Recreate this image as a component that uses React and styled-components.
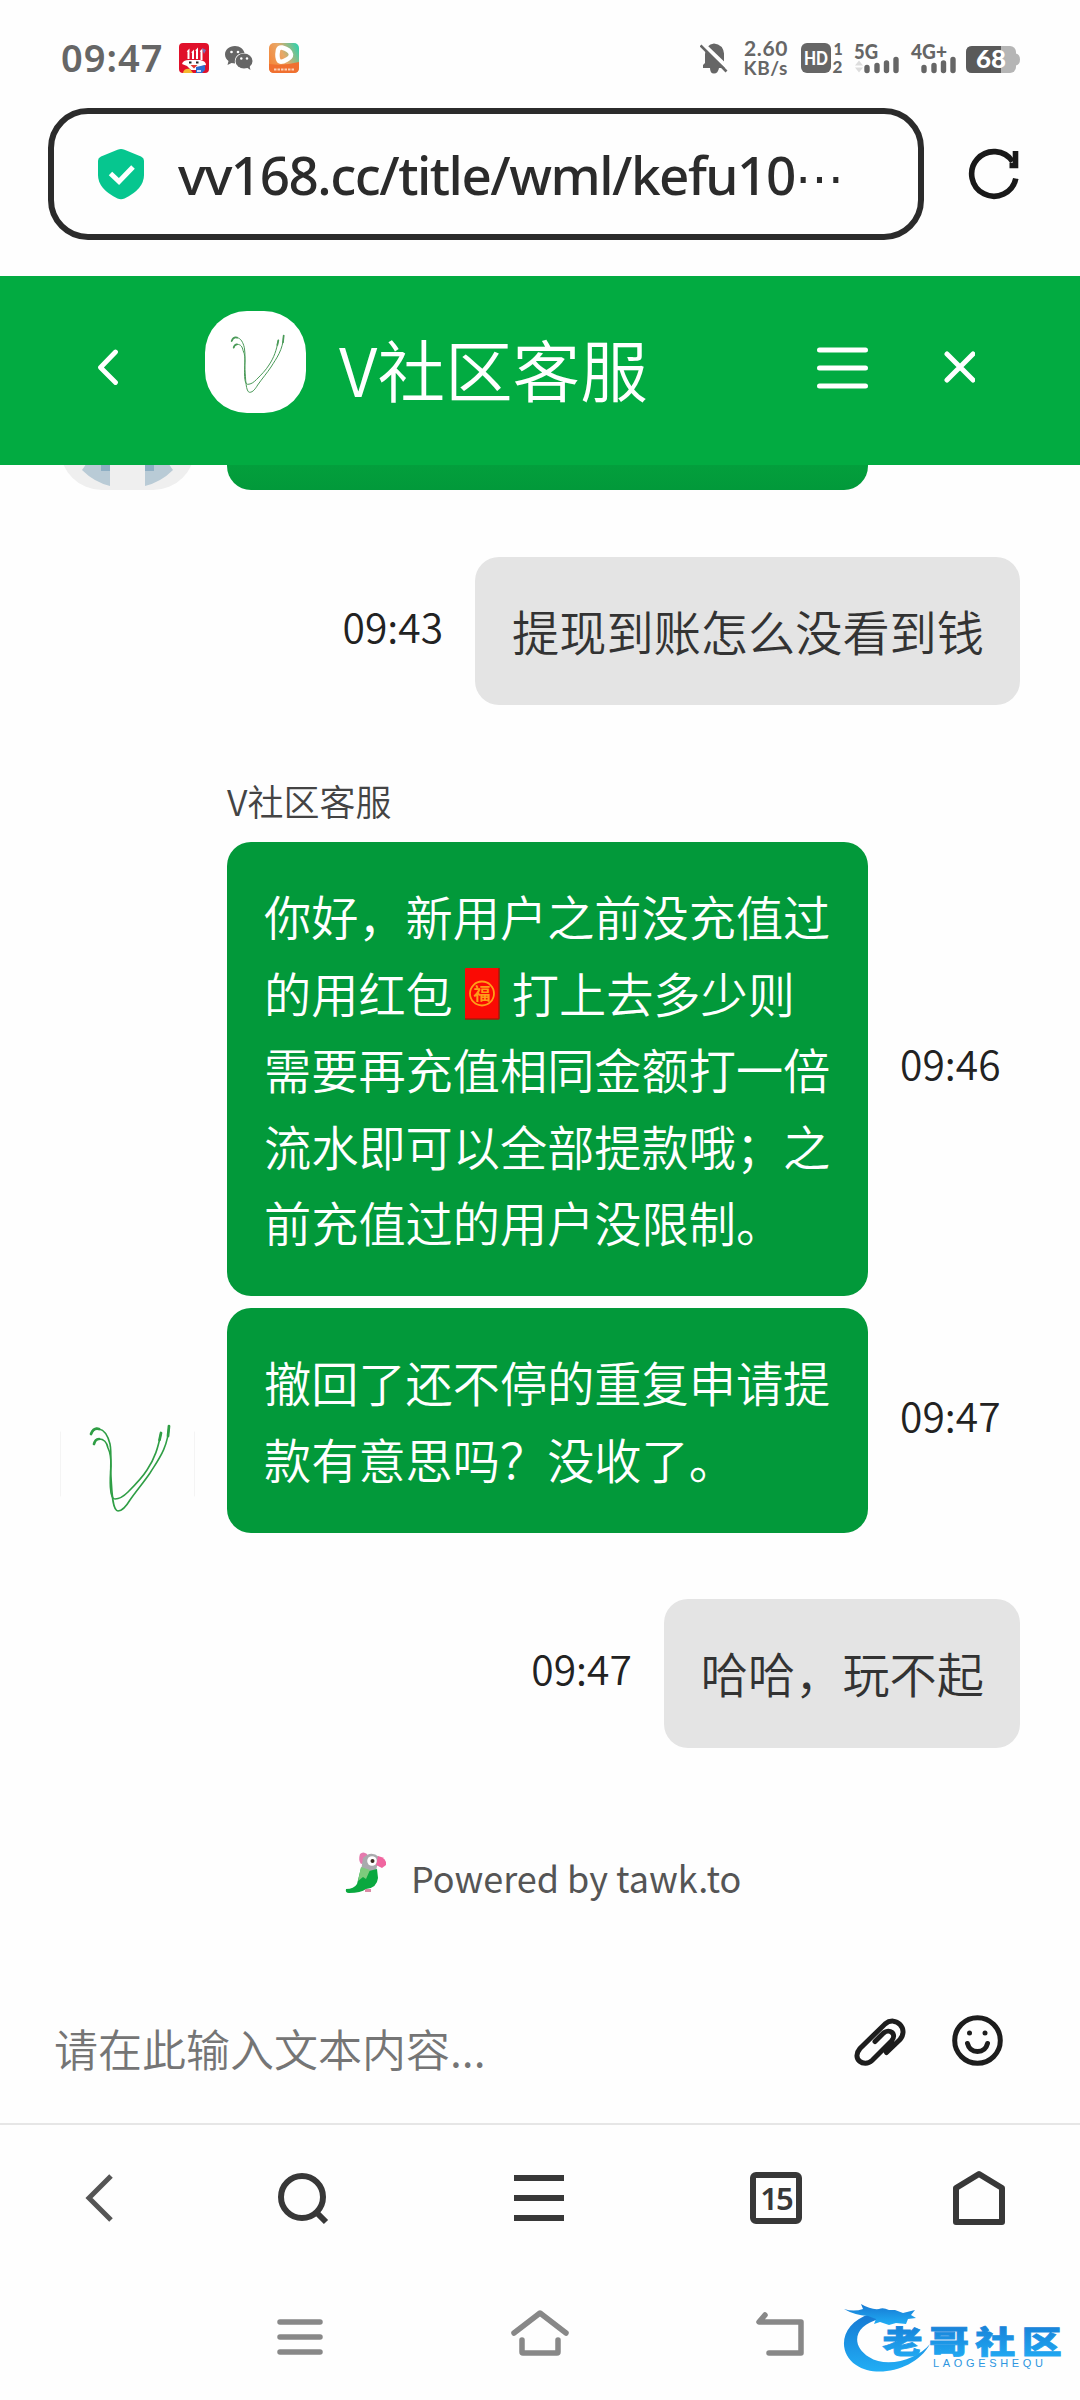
import React from 'react';
import styled, { createGlobalStyle, css } from 'styled-components';

const GlobalStyle = createGlobalStyle`
  * { box-sizing: border-box; }
  body {
    margin: 0;
    background: #fff;
    font-family: "Noto Sans CJK SC", "Noto Sans", sans-serif;
  }
  svg { display: block; flex: none; }
`;

const GREEN = '#02ab41';
const BUBBLE = '#02993a';

const messages = {
  user1: '提现到账怎么没看到钱',
  user2: '哈哈，玩不起',
};

const Screen = styled.div`
  width: 1080px;
  height: 2400px;
  display: flex;
  flex-direction: column;
  overflow: hidden;
  background: #fefefe;
`;

/* ---------- status bar ---------- */

const StatusBar = styled.div`
  height: 108px;
  padding: 8px 60px 0 60px;
  display: flex;
  align-items: center;
  justify-content: space-between;
  color: #666;
  font-family: "Noto Sans", sans-serif;
`;

const StatusGroup = styled.div`
  display: flex;
  align-items: center;
`;

const Clock = styled.span`
  width: 102px;
  margin: 0 16px 3px 1px;
  font-size: 38px;
  font-weight: 600;
  line-height: 40px;
  letter-spacing: 1px;
  white-space: nowrap;
`;

const Speed = styled.div`
  width: 50px;
  margin: 0 12px 0 10px;
  display: flex;
  flex-direction: column;
  align-items: flex-end;
  font-family: Lato, sans-serif;
  font-weight: 700;
  white-space: nowrap;
`;

const SpeedLine = styled.span`
  font-size: ${({ $size }) => $size}px;
  line-height: 20px;
  letter-spacing: 0.6px;
`;

/* ---------- address bar ---------- */

const AddressRow = styled.div`
  height: 168px;
  padding: 0 60px 0 48px;
  display: flex;
  align-items: flex-start;
  justify-content: space-between;
`;

const AddressBox = styled.div`
  width: 876px;
  height: 132px;
  padding-left: 44px;
  display: flex;
  align-items: center;
  border: 6px solid #2b2b2b;
  border-radius: 40px;
`;

const Url = styled.span`
  margin: 2px 0 0 34px;
  font-family: "Noto Sans", sans-serif;
  font-size: 53px;
  font-weight: 500;
  line-height: 64px;
  letter-spacing: -1.5px;
  color: #2b2b2b;
  white-space: nowrap;
`;

const Dots = styled.span`
  font-size: 49px;
`;

const ReloadWrap = styled.div`
  height: 132px;
  display: flex;
  align-items: center;
`;

/* ---------- chat header ---------- */

const Header = styled.header`
  height: 189px;
  flex: none;
  padding: 0 105px 5px 97px;
  display: flex;
  align-items: center;
  background: ${GREEN};
`;

const HeaderAvatar = styled.div`
  width: 101px;
  height: 102px;
  margin: 0 33px 12px 86px;
  border-radius: 42px;
  background: #fff;
  display: flex;
  align-items: center;
  justify-content: center;
`;

const HeaderTitle = styled.h1`
  flex: 1;
  margin: 0;
  font-size: 67.6px;
  font-weight: 350;
  line-height: 80px;
  color: #fff;
  white-space: nowrap;
`;

/* ---------- conversation ---------- */

const Chat = styled.main`
  height: 1525px;
  flex: none;
  padding: 0 60px;
  display: flex;
  flex-direction: column;
`;

const Clipped = styled.div`
  height: 25px;
  display: flex;
  align-items: flex-end;
  gap: 32px;
  overflow: hidden;
`;

const Row = styled.div`
  display: flex;
  align-items: center;
  gap: 32px;
  ${({ $mine }) => $mine && css`
    justify-content: flex-end;
  `}
  margin-top: ${({ $top }) => $top || 0}px;
`;

const Bubble = styled.div`
  padding: 36px 36px 36px 37px;
  border-radius: 24px;
  font-size: 47.2px;
  font-weight: 350;
  line-height: 76.4px;
  white-space: nowrap;
  background: ${({ $mine }) => ($mine ? '#e4e4e4' : BUBBLE)};
  color: ${({ $mine }) => ($mine ? '#333' : '#fff')};
  ${({ $mine }) => !$mine && css`
    width: 641px;
  `}
`;

const BubbleEnd = styled.div`
  width: 641px;
  height: 60px;
  border-radius: 24px;
  background: linear-gradient(#039f3c 58%, #02993a);
`;

const Line = styled.div`
  height: 76.4px;
  display: flex;
  align-items: center;
`;

const Time = styled.span`
  font-size: 40.8px;
  font-weight: 350;
  line-height: 48px;
  padding-bottom: ${({ $lift }) => $lift || 10}px;
  color: #222;
`;

const Sender = styled.div`
  margin: 72px 0 0 167px;
  height: 65px;
  font-size: 36px;
  font-weight: 350;
  line-height: 46px;
  color: #444;
`;

const AgentGroup = styled.div`
  display: flex;
  align-items: flex-end;
`;

const AgentAvatar = styled.div`
  width: 135px;
  height: 135px;
  margin-right: 32px;
`;

const Stack = styled.div`
  display: flex;
  flex-direction: column;
  gap: 12px;
`;

const Powered = styled.div`
  margin-top: 99px;
  height: 60px;
  display: flex;
  align-items: center;
  padding-left: 285px;
  gap: 24px;
  font-size: 36px;
  color: #555;
  white-space: nowrap;
`;

const ParrotIcon = styled.svg`
  margin-bottom: 7px;
`;

/* ---------- composer and bottom bars ---------- */

const Composer = styled.div`
  height: 135px;
  flex: none;
  padding: 0 77px 0 54px;
  display: flex;
  align-items: flex-start;
  border-bottom: 2px solid #e6e6e6;
`;

const Placeholder = styled.span`
  flex: 1;
  padding-top: 26px;
  font-size: 44px;
  font-weight: 350;
  line-height: 64px;
  color: #757575;
`;

const ComposerIcons = styled.div`
  display: flex;
  gap: 46px;
  padding-top: 25px;
`;

const Toolbar = styled.nav`
  height: 145px;
  flex: none;
  padding: 1px 74px 0 84px;
  display: flex;
  align-items: center;
`;

const Tool = styled.div`
  margin-left: ${({ $gap }) => $gap || 0}px;
`;

const TabCount = styled.div`
  width: 52px;
  height: 52px;
  display: flex;
  align-items: center;
  justify-content: center;
  border: 6px solid #383838;
  border-radius: 6px;
  font-family: "Noto Sans", sans-serif;
  font-size: 31px;
  font-weight: 600;
  letter-spacing: -2px;
  line-height: 1;
  color: #383838;
`;

const SystemBar = styled.div`
  flex: 1;
  padding-left: 276px;
  display: flex;
  align-items: flex-start;
`;

const Brand = styled.div`
  margin-top: 29px;
`;

/* ---------- drawings ---------- */

const SmallIcon = styled.svg`
  margin-right: 15px;
`;

const NewsIcon = () => (
  <SmallIcon width="30" height="30" viewBox="0 0 30 30">
    <rect width="30" height="30" rx="4" fill="#e0102a" />
    <path d="M8.500 9l1-1v8M13 10l1-1v7M17 8l1-1v9M21.500 9l1-1v9" stroke="#fff" strokeWidth="2" fill="none" />
    <path d="M23 5l4 2-2 4z" fill="#7a6fb8" />
    <path d="M3 21q1-4 7-4h11q6 1 6 5l-4 1-5 4h-6l-4-4z" fill="#fff" />
    <path d="M10 19.500h2.500M17 19.500h2.500" stroke="#222" strokeWidth="2" />
    <path d="M11.500 22h7l-3.500 3.500z" fill="#e03a30" />
    <path d="M4 30q1-5 7-4l3 4z" fill="#f5b82e" />
    <path d="M17 24l9-2v5l-3 3h-6z" fill="#2e6fd0" />
    <path d="M18 27h4v2h-4z" fill="#cfe0fa" />
  </SmallIcon>
);

const WechatIcon = () => (
  <SmallIcon width="30" height="26" viewBox="0 0 30 26">
    <path
      d="M11 1C5 1 1 5 1 9.500c0 3 1.500 5 3.500 6.500L3.500 20l4-2 3.500.5C10 12 14 8 20.500 8 19.500 4 16 1 11 1z"
      fill="#666"
    />
    <ellipse cx="20" cy="16" rx="8.500" ry="7.500" fill="#666" />
    <path d="M22 22l4.500 3-1-4z" fill="#666" />
    <circle cx="7.500" cy="7" r="1.300" fill="#fff" />
    <circle cx="14" cy="7" r="1.300" fill="#fff" />
    <circle cx="17.300" cy="13.500" r="1.200" fill="#fff" />
    <circle cx="23" cy="13.500" r="1.200" fill="#fff" />
  </SmallIcon>
);

const VideoIcon = () => (
  <svg width="30" height="30" viewBox="0 0 30 30">
    <defs>
      <linearGradient id="video" x1="0" y1="0.700" x2="1" y2="0.200">
        <stop offset="0" stopColor="#f58538" />
        <stop offset="0.500" stopColor="#e8a868" />
        <stop offset="1" stopColor="#38cfa8" />
      </linearGradient>
    </defs>
    <rect width="30" height="30" rx="5" fill="url(#video)" />
    <path d="M0 21q15 2 30-2v6q0 5-5 5H5q-5 0-5-5z" fill="#f07030" />
    <path d="M9 7q1-3 4-2.500 8 2 9 7 0 3-4 5-6 3.500-8 1.500Q7.500 15 9 7z" fill="none" stroke="#fff" strokeWidth="4.500" />
    <path d="M5 26.500h20" stroke="#fbd0b8" strokeWidth="2.200" strokeDasharray="2.500 1" />
  </svg>
);

const BellOff = () => (
  <svg width="28" height="32" viewBox="0 0 28 32">
    <path d="M3 26v-3l2-2v-9Q6 2.500 14 1.500q9 1 10 10v9l2 3V26h-7q-1 5.500-5 5.500T10 26z" fill="#666" />
    <path d="M2 1l27 26" stroke="#fff" strokeWidth="4" />
    <path d="M0.500 3.500l26 26" stroke="#666" strokeWidth="2.600" />
  </svg>
);

const StatusGlyphs = () => (
  <svg width="220" height="50" viewBox="0 -8 220 50" fontFamily="Lato, sans-serif" fontWeight="900" fill="#666">
    <rect x="1" y="2" width="30" height="30" rx="6" />
    <text x="4" y="23.500" fontSize="18" fill="#fff" textLength="24" lengthAdjust="spacingAndGlyphs">HD</text>
    <text x="33.500" y="14" fontSize="16" textLength="8">1</text>
    <text x="32.500" y="31.500" fontSize="17">2</text>
    <text x="54" y="17.500" fontSize="21" textLength="24" lengthAdjust="spacingAndGlyphs">5G</text>
    <path d="M55 24.500l4-5 4 5zM55 26.500l4 5 4-5z" fill="#ddd" />
    <path d="M67 26.500v3M77 24.500v5M86.500 22v7.500M96 18.500v11" stroke="#666" strokeWidth="5.400" strokeLinecap="round" />
    <text x="111" y="17.500" fontSize="21" textLength="36" lengthAdjust="spacingAndGlyphs">4G+</text>
    <path d="M124 26.500v3M134 24.500v5M143.500 22v7.500M153 18.500v11" stroke="#666" strokeWidth="5.400" strokeLinecap="round" />
    <rect x="166" y="5" width="50" height="27" rx="6" fill="#b5b5b5" />
    <path d="M216 12.500q4 1 4 6t-4 6z" fill="#b5b5b5" />
    <path d="M172 5h29v27h-29q-6 0-6-6V11q0-6 6-6z" fill="#5a5a5a" />
    <text x="176" y="27" fontSize="25" fill="#fff" textLength="30" lengthAdjust="spacingAndGlyphs">68</text>
  </svg>
);

const Shield = () => (
  <svg width="46" height="52" viewBox="0 0 46 52">
    <path d="M19.500 1.800q3.500-1.400 7 0L43 8.500q3 1.500 3 4V27q0 14-19.500 23.500-3.500 1.500-7 0Q0 41 0 27V12.500q0-2.500 3-4z" fill="#06c68f" />
    <path d="M12.500 25.500l8.500 8L35 19" fill="none" stroke="#fff" strokeWidth="5" />
  </svg>
);

const Reload = () => (
  <svg width="52" height="52" viewBox="0 0 52 52" fill="none" stroke="#191919" strokeWidth="5.600">
    <path d="M47.800 30.500A22.300 22.300 0 1 1 44.500 13.500" />
    <path d="M41.500 17.500H47.500V3" />
  </svg>
);

const VMark = ({ size, color, width, box }) => (
  <svg width={size} height={size} viewBox="0 0 135 135" fill="none" stroke={color} strokeLinecap="round">
    {box && <path d="M.5 34v64M134.500 34v64" stroke="#f4f4f4" strokeWidth="1" />}
    <path d="M31 36C33 31 36 30 39 31C45 32 48 38 50 46C52 56 50 68 51 79C52 92 52 113 58 113C63 113 67 107 70 102C77 92 84 84 90 75C98 62 108 50 109 28" strokeWidth={width} />
    <path d="M34 46C35 42 37 41 39 41C45 41 47 45 48 50C51 56 51 62 51 68C50 80 49 101 55 101C60 101 64 98 68 94C76 86 82 80 87 72C95 60 98 50 101 35" strokeWidth={width} />
    <path d="M31 36C33 31 36 30 39 31M34 46C35 42 37 41 39 41M109 28l-1 10M101 35l-1.500 7" strokeWidth={width * 1.700} />
  </svg>
);

const OldAvatar = () => (
  <svg width="135" height="135" viewBox="0 0 135 135">
    <rect width="135" height="135" rx="42" fill="#efefef" />
    <path d="M28 106Q25 111 22 115q12 12 28 16v-25zM107 106q3 5 6 9-12 12-28 16v-25z" fill="#b9cbd6" />
    <path d="M41 106h9v10h-9zM85 106h9v10h-9z" fill="#8eafc4" />
  </svg>
);

const RedPacket = () => (
  <svg width="59" height="54" viewBox="0 0 59 54">
    <rect x="12" y="2" width="34" height="51" rx="1" fill="#fa0a04" />
    <path d="M46 2v51M12 53h34" stroke="#a81808" strokeWidth="1.500" />
    <circle cx="29" cy="27.500" r="12" fill="none" stroke="#ff9d18" strokeWidth="1.800" />
    <text x="29" y="33.500" fontSize="17" fontWeight="700" textAnchor="middle" fill="#ff9d18">福</text>
  </svg>
);

const Parrot = () => (
  <ParrotIcon width="42" height="44" viewBox="0 0 42 44">
    <path d="M15 3q3-3 7 0l1 8-7 2q-3-4-1-10z" fill="#e57aae" />
    <path d="M16 20l2-13q8-8 16-1l-3 14q-6 4-15 4z" fill="#a9aaad" />
    <path d="M33 5q9 2 8 9l-4 3-6-3z" fill="#f0659f" />
    <circle cx="27" cy="10" r="4.800" fill="#fff" />
    <circle cx="27.500" cy="10" r="2" fill="#3a2a20" />
    <path d="M16 17l-4 16q-3 5-11 5-1 4 3 4 12 0 17-4 11-1 12-11l-1-9-8 2z" fill="#0aa83f" />
    <path d="M16 16l-3 14 5-4 3 2 4-9z" fill="#7ccb7c" />
    <path d="M20 38h6v3h-6z" fill="#d98aa4" />
  </ParrotIcon>
);

const Watermark = () => (
  <svg width="226" height="90" viewBox="0 0 226 90">
    <defs>
      <linearGradient id="mark" x1="0" y1="0" x2="0" y2="1">
        <stop offset="0" stopColor="#1678d2" />
        <stop offset="1" stopColor="#21aef5" />
      </linearGradient>
    </defs>
    <path d="M28 15C-1 24-6 52 14 66c20 14 60 5 74-21-12 15-43 25-61 13C8 46 12 26 38 20z" fill="url(#mark)" />
    <path d="M2 10q10 3 19 0l-2-5q10 6 18 5 4-2 10 1l6 0 8 3 12-3-4 5 5 3-8 1-2 5-10-1-7 2-9-3-6 2 2-5-8-3q-14-1-24-7z" fill="url(#mark)" />
    <text
      x="0" y="54" fontSize="31" fontWeight="900" fill="url(#mark)" stroke="url(#mark)" strokeWidth="0.800"
      transform="translate(40.500 0) scale(1.290 1)" letterSpacing="5"
    >
      老哥社区
    </text>
    <text x="91" y="68" fontSize="11" fontFamily="Liberation Sans" fill="#2d96e0" textLength="110">LAOGESHEQU</text>
  </svg>
);

export default function App() {
  return (
    <Screen>
      <GlobalStyle />

      <StatusBar>
        <StatusGroup>
          <Clock>09:47</Clock>
          <NewsIcon />
          <WechatIcon />
          <VideoIcon />
        </StatusGroup>
        <StatusGroup>
          <BellOff />
          <Speed>
            <SpeedLine $size={21}>2.60</SpeedLine>
            <SpeedLine $size={19}>KB/s</SpeedLine>
          </Speed>
          <StatusGlyphs />
        </StatusGroup>
      </StatusBar>

      <AddressRow>
        <AddressBox>
          <Shield />
          <Url>vv168.cc/title/wml/kefu10<Dots>⋯</Dots></Url>
        </AddressBox>
        <ReloadWrap>
          <Reload />
        </ReloadWrap>
      </AddressRow>

      <Header>
        <svg width="22" height="38" viewBox="0 0 22 38" fill="none" stroke="#fff" strokeWidth="4.800" strokeLinecap="round" strokeLinejoin="round">
          <path d="M18.500 3L3.500 18.500l15 15" />
        </svg>
        <HeaderAvatar>
          <VMark size={90} color="#4a9a58" width={1.5} />
        </HeaderAvatar>
        <HeaderTitle>V社区客服</HeaderTitle>
        <svg width="158" height="42" viewBox="0 0 158 42" fill="none" stroke="#fff" strokeLinecap="round">
          <path d="M2.500 3h46M2.500 21h46M2.500 39h46" strokeWidth="5" />
          <path d="M130 7l26 26M156 7l-26 26" strokeWidth="5" />
        </svg>
      </Header>

      <Chat>
        <Clipped>
          <OldAvatar />
          <BubbleEnd />
        </Clipped>

        <Row $mine $top={67}>
          <Time>09:43</Time>
          <Bubble $mine>{messages.user1}</Bubble>
        </Row>

        <Sender>V社区客服</Sender>
        <AgentGroup>
          <AgentAvatar>
            <VMark size={135} color="#2f9e45" width={1.6} box />
          </AgentAvatar>
          <Stack>
            <Row>
              <Bubble>
                <Line>你好，新用户之前没充值过</Line>
                <Line>的用红包<RedPacket />打上去多少则</Line>
                <Line>需要再充值相同金额打一倍</Line>
                <Line>流水即可以全部提款哦；之</Line>
                <Line>前充值过的用户没限制。</Line>
              </Bubble>
              <Time $lift={12}>09:46</Time>
            </Row>
            <Row>
              <Bubble>
                <Line>撤回了还不停的重复申请提</Line>
                <Line>款有意思吗？没收了。</Line>
              </Bubble>
              <Time $lift={12}>09:47</Time>
            </Row>
          </Stack>
        </AgentGroup>

        <Row $mine $top={66}>
          <Time>09:47</Time>
          <Bubble $mine>{messages.user2}</Bubble>
        </Row>

        <Powered>
          <Parrot />
          Powered by tawk.to
        </Powered>
      </Chat>

      <Composer>
        <Placeholder>请在此输入文本内容...</Placeholder>
        <ComposerIcons>
          <svg width="54" height="54" viewBox="0 0 54 54" fill="none" stroke="#1d1d1d" strokeWidth="5" strokeLinecap="round">
            <path d="M34.500 37.500L48 24.500C57 14 44 0 33 9L8 33.500C-1 44 12 53 20 45.500L39.500 26c6-7-2-13-8-8L23 26.500" />
          </svg>
          <svg width="51" height="51" viewBox="0 0 51 51" fill="none" stroke="#1d1d1d" strokeWidth="5" strokeLinecap="round">
            <circle cx="25.500" cy="25.500" r="22.800" />
            <path d="M15.500 28.500q2 8 10 8t10-8" />
            <circle cx="17.500" cy="18" r="2.500" fill="#1d1d1d" stroke="none" />
            <circle cx="33" cy="18" r="2.500" fill="#1d1d1d" stroke="none" />
          </svg>
        </ComposerIcons>
      </Composer>

      <Toolbar>
        <Tool>
          <svg width="30" height="50" viewBox="0 0 30 50" fill="none" stroke="#555" strokeWidth="5">
            <path d="M27 3L5 25l22 22" />
          </svg>
        </Tool>
        <Tool $gap={162}>
          <svg width="54" height="54" viewBox="0 0 54 54" fill="none" stroke="#383838" strokeWidth="6">
            <circle cx="26" cy="26" r="21" />
            <path d="M40 41l10 10" />
          </svg>
        </Tool>
        <Tool $gap={183}>
          <svg width="52" height="50" viewBox="0 0 52 50" stroke="#383838" strokeWidth="6">
            <path d="M1 5h50M1 25h50M1 45h50" />
          </svg>
        </Tool>
        <Tool $gap={185}>
          <TabCount>15</TabCount>
        </Tool>
        <Tool $gap={150}>
          <svg width="54" height="58" viewBox="0 0 54 58" fill="none" stroke="#383838" strokeWidth="6" strokeLinejoin="round">
            <path d="M4 19L27 5l23 14v34H4z" />
          </svg>
        </Tool>
      </Toolbar>

      <SystemBar>
        <svg width="566" height="90" viewBox="0 0 566 90" fill="none" stroke="#888" strokeWidth="5.500" strokeLinecap="round" strokeLinejoin="round">
          <path d="M4 52h40M4 67h40M4 82h40" />
          <path d="M238 63l26-20 26 20M246 70v12q0 1 1 1h34q1 0 1-1V70" />
          <path d="M489 45l-6 7h42v31h-32" />
        </svg>
        <Brand>
          <Watermark />
        </Brand>
      </SystemBar>
    </Screen>
  );
}
